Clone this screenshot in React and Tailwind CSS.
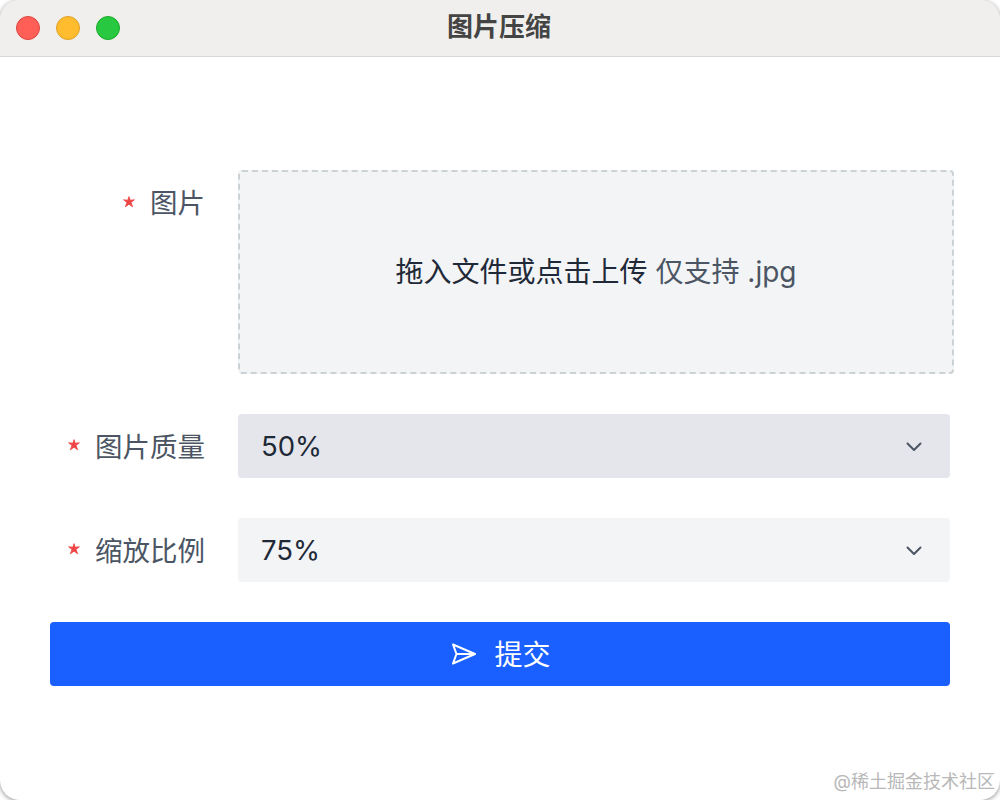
import React from 'react'

const FONT = 'font-["Inter","Noto_Sans_CJK_SC",sans-serif]'

function Chevron() {
  return (
    <svg width="20" height="20" viewBox="0 0 20 20" fill="none" stroke="#4b5563" strokeWidth="2" strokeLinecap="round" strokeLinejoin="round" className="mt-[2px]">
      <path d="M3.5 6.5 10 13l6.5-6.5" />
    </svg>
  )
}

function Star() {
  return (
    <svg width="12" height="12" viewBox="0 0 12 12" fill="#ef4444" stroke="#ef4444" strokeWidth="0.8" strokeLinejoin="round" className="mr-[15px] mt-[-2px]">
      <path d="M6 .6 7.2 4.2 11.4 3.8 8 6.4 9.6 10.8 6 8.2 2.4 10.8 4 6.4 .6 3.8 4.8 4.2Z" />
    </svg>
  )
}

function Label({ children }) {
  return (
    <div className="w-[155px] shrink-0 flex justify-end items-center text-[27.5px] leading-[32px] text-[#4b5563]">
      <Star />
      <span className="mt-[1px]">{children}</span>
    </div>
  )
}

function SelectBox({ value, active }) {
  return (
    <div className={`w-[712px] shrink-0 h-[64px] rounded-[4px] flex items-center justify-between pl-6 pr-[26px] text-[27.5px] text-[#1f2937] ${active ? 'bg-[#e4e6ec]' : 'bg-[#f2f4f6]'}`}>
      <span className="mt-[1px] ml-[-1px]">{value}</span>
      <Chevron />
    </div>
  )
}

export default function App() {
  return (
    <div className={`relative w-[1000px] h-[800px] bg-white overflow-hidden ${FONT}`}>
      <div className="w-full h-full bg-white rounded-[20px] overflow-hidden flex flex-col shadow-[0_1px_5px_rgba(0,0,0,0.45)]">
        {/* Title bar */}
        <div className="relative h-[57px] shrink-0 bg-[#f0efed] border-b border-[#d8d8d8] flex items-center justify-center">
          <div className="absolute left-4 top-4 flex gap-4">
            <div className="w-6 h-6 rounded-full bg-[#ff5f57] border border-[#e0443e]" />
            <div className="w-6 h-6 rounded-full bg-[#febc2e] border border-[#dea123]" />
            <div className="w-6 h-6 rounded-full bg-[#28c840] border border-[#1aab29]" />
          </div>
          <span className="text-[26px] leading-[32px] mt-[-3px] font-bold text-[#444444] ml-[-2px]">图片压缩</span>
        </div>

        <div className="flex flex-col px-[50px] pt-[113px]">
          <div className="flex gap-[33px]">
            <div className="pt-4 self-start">
              <Label>图片</Label>
            </div>
            <div className="w-[716px] shrink-0 h-[204px] rounded-[4px] border-2 border-dashed border-[#cbd2d6] bg-[#f2f4f6] flex items-center justify-center text-[28px]">
              <span className="text-[#1f2937]">拖入文件或点击上传</span>
              <span className="ml-2 text-[#4b5563]">仅支持 .jpg</span>
            </div>
          </div>

          <div className="flex gap-[33px] mt-10 items-center">
            <Label>图片质量</Label>
            <SelectBox value="50%" active />
          </div>

          <div className="flex gap-[33px] mt-10 items-center">
            <Label>缩放比例</Label>
            <SelectBox value="75%" />
          </div>

          <button className="mt-10 w-[900px] h-[64px] rounded-[4px] bg-[#1a5fff] text-white text-[28px] flex items-center justify-center gap-[17px]">
            <svg width="26" height="24" viewBox="0 0 26 24" fill="none" stroke="white" strokeWidth="2" strokeLinejoin="round" className="ml-[2px]">
              <path d="M2 2.5 24 12 2 21.5 5.5 12Z" />
              <path d="M5.5 12H24" />
            </svg>
            <span className="mt-[1px]">提交</span>
          </button>
        </div>
      </div>

      {/* Watermark */}
      <div className="absolute right-[5px] bottom-[6px] text-[18px] leading-[24px] text-[#b8b8b8]">@稀土掘金技术社区</div>
    </div>
  )
}
